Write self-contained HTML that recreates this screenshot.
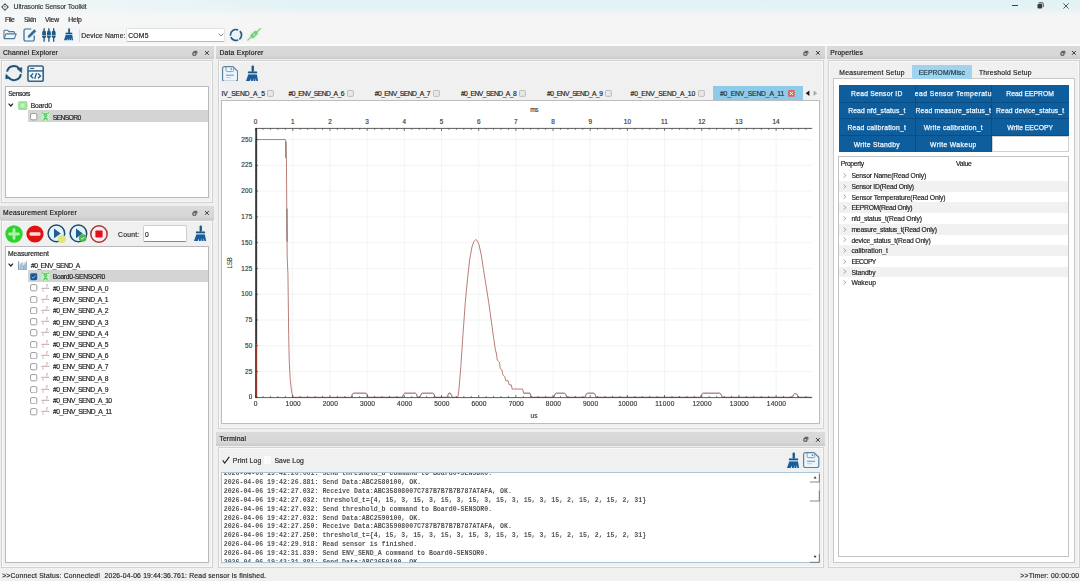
<!DOCTYPE html>
<html><head><meta charset="utf-8"><title>Ultrasonic Sensor Toolkit</title>
<style>
html,body{margin:0;padding:0}
body{width:1080px;height:581px;overflow:hidden;position:relative;background:#f0f0f0;font-family:"Liberation Sans",sans-serif;font-size:6.75px}
#r>div,#r>span,#r>svg{position:absolute}
#r{position:absolute;left:0;top:0;width:1080px;height:581px;opacity:0.999}
span{white-space:pre;-webkit-text-stroke:0.18px}
</style></head><body><div id="r">
<div style="left:0px;top:0px;width:1080px;height:26px;background:linear-gradient(to right,rgba(246,248,248,0.75),rgba(246,248,248,0) 320px),linear-gradient(to bottom,#e1f2f5 0,#e5f3f5 9px,#f5f5f5 15px)"></div>
<div style="left:0px;top:26px;width:1080px;height:18px;background:#f5f5f5"></div>
<div style="left:0px;top:43.8px;width:1080px;height:2px;background:#fbfbfb"></div>
<div style="left:0px;top:46px;width:213.8px;height:13.2px;background:linear-gradient(to bottom,#dbdbdb 0,#d6d6d6 78%,#cbcbcb 92%,#cecece 100%)"></div>
<div style="left:1.2px;top:59.800000000000004px;width:212.0px;height:143.70000000000002px;box-sizing:border-box;border:1px solid #d2d2d2;background:#f0f0f0;box-shadow:inset 0 0 0 1px #f9f9f9"></div>
<svg style="left:192.3px;top:49.7px" width="6" height="6" viewBox="0 0 6 6"><path d="M1.6 1.3h3.3v2.2M0.9 2.6h3v2.6h-3z" fill="none" stroke="#3a3a3a" stroke-width="0.9"/></svg>
<svg style="left:204.0px;top:50.1px" width="6" height="6" viewBox="0 0 6 6"><path d="M1 1L4.800 4.800M4.800 1L1 4.800" stroke="#333" stroke-width="0.950"/></svg>
<div style="left:0px;top:206px;width:213.8px;height:13.6px;background:linear-gradient(to bottom,#dbdbdb 0,#d6d6d6 78%,#cbcbcb 92%,#cecece 100%)"></div>
<div style="left:1.2px;top:220.2px;width:212.0px;height:347.59999999999997px;box-sizing:border-box;border:1px solid #d2d2d2;background:#f0f0f0;box-shadow:inset 0 0 0 1px #f9f9f9"></div>
<svg style="left:192.3px;top:209.9px" width="6" height="6" viewBox="0 0 6 6"><path d="M1.6 1.3h3.3v2.2M0.9 2.6h3v2.6h-3z" fill="none" stroke="#3a3a3a" stroke-width="0.9"/></svg>
<svg style="left:204.0px;top:210.3px" width="6" height="6" viewBox="0 0 6 6"><path d="M1 1L4.800 4.800M4.800 1L1 4.800" stroke="#333" stroke-width="0.950"/></svg>
<div style="left:216.4px;top:46px;width:608.4px;height:13.2px;background:linear-gradient(to bottom,#dbdbdb 0,#d6d6d6 78%,#cbcbcb 92%,#cecece 100%)"></div>
<div style="left:217.6px;top:59.800000000000004px;width:606.6px;height:369.0px;box-sizing:border-box;border:1px solid #d2d2d2;background:#f0f0f0;box-shadow:inset 0 0 0 1px #f9f9f9"></div>
<svg style="left:803.3px;top:49.7px" width="6" height="6" viewBox="0 0 6 6"><path d="M1.6 1.3h3.3v2.2M0.9 2.6h3v2.6h-3z" fill="none" stroke="#3a3a3a" stroke-width="0.9"/></svg>
<svg style="left:815.0px;top:50.1px" width="6" height="6" viewBox="0 0 6 6"><path d="M1 1L4.800 4.800M4.800 1L1 4.800" stroke="#333" stroke-width="0.950"/></svg>
<div style="left:216.4px;top:432.4px;width:608.4px;height:13.5px;background:linear-gradient(to bottom,#dbdbdb 0,#d6d6d6 78%,#cbcbcb 92%,#cecece 100%)"></div>
<div style="left:217.6px;top:446.5px;width:606.6px;height:121.3px;box-sizing:border-box;border:1px solid #d2d2d2;background:#f0f0f0;box-shadow:inset 0 0 0 1px #f9f9f9"></div>
<svg style="left:803.3px;top:436.25px" width="6" height="6" viewBox="0 0 6 6"><path d="M1.6 1.3h3.3v2.2M0.9 2.6h3v2.6h-3z" fill="none" stroke="#3a3a3a" stroke-width="0.9"/></svg>
<svg style="left:815.0px;top:436.65px" width="6" height="6" viewBox="0 0 6 6"><path d="M1 1L4.800 4.800M4.800 1L1 4.800" stroke="#333" stroke-width="0.950"/></svg>
<div style="left:827.2px;top:46px;width:253.79999999999995px;height:13.2px;background:linear-gradient(to bottom,#dbdbdb 0,#d6d6d6 78%,#cbcbcb 92%,#cecece 100%)"></div>
<div style="left:828.4000000000001px;top:59.800000000000004px;width:251.99999999999994px;height:508.6px;box-sizing:border-box;border:1px solid #d2d2d2;background:#f0f0f0;box-shadow:inset 0 0 0 1px #f9f9f9"></div>
<svg style="left:1059.5px;top:49.7px" width="6" height="6" viewBox="0 0 6 6"><path d="M1.6 1.3h3.3v2.2M0.9 2.6h3v2.6h-3z" fill="none" stroke="#3a3a3a" stroke-width="0.9"/></svg>
<svg style="left:1071.2px;top:50.1px" width="6" height="6" viewBox="0 0 6 6"><path d="M1 1L4.800 4.800M4.800 1L1 4.800" stroke="#333" stroke-width="0.950"/></svg>
<svg style="left:1.3px;top:2.5px" width="8" height="8" viewBox="0 0 8 8"><circle cx="4" cy="4" r="2.500" fill="#f4f8f8" stroke="#3c3c3c" stroke-width="0.900"/><path d="M4 0.200v1.500M4 6.300v1.500M0.200 4h1.500M6.300 4h1.500M4 2.900v1.400" stroke="#3c3c3c" stroke-width="0.900"/></svg>
<div style="left:1012.2px;top:5.2px;width:5.6px;height:0.8px;background:#444"></div>
<svg style="left:1036.5px;top:2.2px" width="7" height="7" viewBox="0 0 7 7"><path d="M1.8 0.7h3.3a1.2 1.2 0 0 1 1.2 1.2v3.2" fill="none" stroke="#333" stroke-width="0.8"/><rect x="0.5" y="1.8" width="4.7" height="4.7" rx="1.1" fill="#3a3a3a"/></svg>
<svg style="left:1063.3px;top:2.6px" width="6" height="6" viewBox="0 0 6 6"><path d="M0.4 0.4L5.6 5.6M5.6 0.4L0.4 5.6" stroke="#333" stroke-width="0.8"/></svg>
<svg style="left:3.2px;top:29.2px" width="14" height="11" viewBox="0 0 14 11"><path d="M1 9.2V2.2a1 1 0 0 1 1-1h2.6l1.3 1.4h4.6a1 1 0 0 1 1 1V4.6" fill="none" stroke="#4d7894" stroke-width="1.1"/><path d="M1.2 9.6L3 4.9h10.2L11.4 9.6z" fill="#eef6fb" stroke="#4d7894" stroke-width="1.1" stroke-linejoin="round"/></svg>
<svg style="left:23px;top:28px" width="14" height="14" viewBox="0 0 14 14"><path d="M8.2 1H2.4A1.4 1.4 0 0 0 1 2.4v9.2A1.4 1.4 0 0 0 2.4 13h7.4a1.4 1.4 0 0 0 1.4-1.4V7.5" fill="#eef6fb" stroke="#2f6a92" stroke-width="1.2"/><path d="M5 9.6l.5-2.2L11.300 1.600l1.700 1.700L7.200 9.1z" fill="#2f6a92" stroke="#2f6a92" stroke-width="0.5"/></svg>
<svg style="left:42px;top:28px" width="14" height="14" viewBox="0 0 14 14"><path d="M2.100 0.700V13.300M6.900 0.700V13.300M11.700 0.700V13.300" stroke="#1c5a88" stroke-width="1.300" stroke-linecap="round"/><g fill="#1c5a88"><rect x="0.200" y="2.600" width="3.800" height="7.700" rx="1.800"/><rect x="5" y="2.600" width="3.800" height="7.700" rx="1.800"/><rect x="9.800" y="2.600" width="3.800" height="7.700" rx="1.800"/></g><rect x="0" y="7.300" width="14" height="0.700" fill="#a9d6f2"/></svg>
<svg style="left:63.5px;top:28.4px;filter:drop-shadow(0 0 0.8px #cdeaf9)" width="9.81" height="12.38" viewBox="0 0 13 16.4"><rect x="5.600" y="0.400" width="2.300" height="6.400" rx="1" fill="#1f5580"/><rect x="1.900" y="6.400" width="9.200" height="1.500" rx="0.500" fill="#1d4668"/><rect x="2.200" y="7.900" width="8.700" height="1.500" fill="#8cc6f0"/><path d="M2.300 9.400h8.600l1.200 6.700h-1.800l-0.500-3-0.500 3h-1.700l-0.400-3-0.500 3h-1.700l-0.300-2.600-1 2.600H0z" fill="#1b5c98"/></svg>
<div style="left:79px;top:29px;width:0.7px;height:13px;background:#dcdcdc"></div>
<div style="left:126.2px;top:27.6px;width:99px;height:14.6px;background:#fff;border:0.6px solid #e2e2e2;border-bottom:0.8px solid #b8b8b8;border-radius:2px;box-sizing:border-box"></div>
<svg style="left:218px;top:33.3px" width="6" height="4" viewBox="0 0 6 4"><path d="M0.6 0.6L3 3l2.400-2.400" fill="none" stroke="#666" stroke-width="0.8"/></svg>
<svg style="left:228.600px;top:27.800px;filter:drop-shadow(0 0 0.800px #d5ecf9)" width="14" height="14" viewBox="0 0 14 14"><circle cx="7" cy="7" r="5.500" fill="#e8f3fa"/><path d="M1.55 7.72A5.5 5.5 0 0 1 9.10 1.92 M10.89 3.11A5.5 5.5 0 0 1 10.35 11.36 M9.10 12.08A5.5 5.5 0 0 1 1.92 9.10" fill="none" stroke="#2a5676" stroke-width="1.600"/></svg>
<svg style="left:247px;top:28px;filter:drop-shadow(0 0 1px #b5f2b5)" width="14" height="13" viewBox="0 0 14 13"><path d="M0.800 12.200L13.400 0.600" stroke="#74d174" stroke-width="1.100" stroke-linecap="round"/><rect x="3.200" y="4.400" width="7.800" height="4.200" rx="1.400" transform="rotate(-43 7.100 6.500)" fill="#74cf7c"/><rect x="6.200" y="5.700" width="1.700" height="1.700" fill="#b6f3b6" transform="rotate(-43 7.100 6.500)"/></svg>
<svg style="left:5px;top:65.2px;filter:drop-shadow(0 0 0.800px #d5ecf9)" width="18" height="17.2" viewBox="0 0 18 17.2"><path d="M2.05 6.64A7 7 0 0 1 14.42 3.79 M15.83 9.07A7 7 0 0 1 3.38 12.41" fill="none" stroke="#1f5273" stroke-width="2"/><path d="M12.200 3.700L16.900 2.700 16.600 7.700z M5.200 13.200L0.700 13.700 1 9.300z" fill="#1f5273" stroke="#1f5273" stroke-width="0.600" stroke-linejoin="round"/></svg>
<svg style="left:26.900px;top:65px;filter:drop-shadow(0 0 0.800px #d5ecf9)" width="17.200" height="17.200" viewBox="0 0 17.200 17.200"><rect x="1" y="1" width="15.200" height="15.200" rx="1.800" fill="#eef7fd" stroke="#3a6583" stroke-width="1.600"/><path d="M1 5.900h15.200" stroke="#3a6583" stroke-width="1.500"/><path d="M3 3.400h4.200" stroke="#2a4f6a" stroke-width="1"/><path d="M6.200 8.500L3.700 10.900 6.200 13.300M11 8.500l2.500 2.400L11 13.300M9.500 8.100L7.700 13.700" fill="none" stroke="#1f5a84" stroke-width="1.300"/></svg>
<div style="left:5px;top:86.2px;width:203.6px;height:111.6px;background:#fff;border:0.9px solid #b9b9b9;box-sizing:border-box"></div>
<svg style="left:8.10px;top:103.10px" width="5.600" height="3.800" viewBox="0 0 5.600 3.800"><path d="M0.600 0.600L2.800 3 5 0.600" fill="none" stroke="#222" stroke-width="1.200"/></svg>
<svg style="left:18.200px;top:100.500px;filter:drop-shadow(0 0 0.600px #c4f2c4)" width="9.600" height="9.200" viewBox="0 0 9.600 9.200"><rect x="0.200" y="0.200" width="9.100" height="8.700" rx="1.400" fill="#98e298"/><rect x="2.600" y="2.400" width="4.200" height="4.200" rx="1" fill="#c3f2c3"/><path d="M1.200 2.200h1M1.200 6.800h1M7.300 2.200h1M7.300 6.800h1" stroke="#c9f4c9" stroke-width="0.800"/></svg>
<div style="left:28.3px;top:110.4px;width:179.6px;height:11.5px;background:#d4d4d4"></div>
<svg style="left:30.20px;top:113.20px" width="7.600" height="7.600" viewBox="0 0 7.600 7.600"><rect x="0.550" y="0.550" width="6.300" height="6.300" rx="1.500" fill="#fdfdfd" stroke="#939393" stroke-width="0.900"/></svg>
<svg style="left:40.8px;top:112.2px;filter:drop-shadow(0 0 0.900px #a8eaa8)" width="9" height="9" viewBox="0 0 9 9"><rect x="0.300" y="0.300" width="8.400" height="8.400" rx="2" fill="#cdf3cd" opacity="0.850"/><g fill="none" stroke="#4fbf5c" stroke-width="1"><path d="M1 0.700C2.400 2.300 6.600 2.300 8 0.700"/><circle cx="4.500" cy="3.600" r="1.300" fill="#8fdc8f"/><path d="M2.200 8.600L4.500 5.200 6.800 8.600M2.600 6.800h3.800"/></g></svg>
<svg style="left:5px;top:224.5px" width="18" height="18" viewBox="0 0 18 18"><circle cx="9" cy="9" r="8.700" fill="#2fd32f"/><path d="M9 4.600v8.800M4.600 9h8.800" stroke="#aef3ae" stroke-width="2.800" stroke-linecap="round"/></svg>
<svg style="left:26.2px;top:224.5px" width="18" height="18" viewBox="0 0 18 18"><circle cx="9" cy="9" r="8.600" fill="#e01212"/><rect x="3.500" y="7.300" width="11" height="3.400" rx="1.300" fill="#fbd9d9"/></svg>
<svg style="left:47.400px;top:224.2px" width="20" height="20" viewBox="0 0 20 20"><circle cx="9.400" cy="9.400" r="8.300" fill="#e4f2fb" stroke="#1f4d6e" stroke-width="1.500"/><path d="M7 4.600v9.600L13.800 9.400z" fill="#1f5f8c"/><circle cx="14.900" cy="15.100" r="4" fill="#dde67a"/></svg>
<svg style="left:68.900px;top:224.2px" width="20" height="20" viewBox="0 0 20 20"><circle cx="9.400" cy="9.400" r="8.300" fill="#e4f2fb" stroke="#1f4d6e" stroke-width="1.500"/><path d="M7 4.600v9.600L13.800 9.400z" fill="#1f5f8c"/><circle cx="13.700" cy="14" r="3.800" fill="#4bb64b"/><path d="M11.900 14l1.300 1.300 2.200-2.400" fill="none" stroke="#e8ffe8" stroke-width="0.900"/></svg>
<svg style="left:90.200px;top:224.5px" width="18" height="18" viewBox="0 0 18 18"><circle cx="9" cy="9" r="8.200" fill="#fdeeee" stroke="#a63434" stroke-width="1.500"/><rect x="5.400" y="5.400" width="7.200" height="7.200" rx="0.800" fill="#e2101e"/></svg>
<div style="left:142.6px;top:225.3px;width:44.8px;height:16.8px;background:#fff;border:0.800px solid #cfcfcf;border-bottom-color:#8a8a8a;border-radius:2px;box-sizing:border-box"></div>
<svg style="left:193.7px;top:225.1px;filter:drop-shadow(0 0 0.8px #cdeaf9)" width="13.00" height="16.40" viewBox="0 0 13 16.4"><rect x="5.600" y="0.400" width="2.300" height="6.400" rx="1" fill="#1f5580"/><rect x="1.900" y="6.400" width="9.200" height="1.500" rx="0.500" fill="#1d4668"/><rect x="2.200" y="7.900" width="8.700" height="1.500" fill="#8cc6f0"/><path d="M2.300 9.400h8.600l1.200 6.700h-1.800l-0.500-3-0.500 3h-1.700l-0.400-3-0.500 3h-1.700l-0.300-2.600-1 2.600H0z" fill="#1b5c98"/></svg>
<div style="left:5px;top:246px;width:203.6px;height:316.7px;background:#fff;border:0.900px solid #b9b9b9;box-sizing:border-box"></div>
<svg style="left:8.10px;top:262.90px" width="5.600" height="3.800" viewBox="0 0 5.600 3.800"><path d="M0.600 0.600L2.800 3 5 0.600" fill="none" stroke="#222" stroke-width="1.200"/></svg>
<svg style="left:18.200px;top:260.600px" width="9" height="9.400" viewBox="0 0 9 9.400"><rect x="0.400" y="1.400" width="8" height="7.400" fill="#dfeaf3"/><g fill="none"><path d="M0.500 0.300v8.500h8M8.300 0.300v8.500" stroke="#7597b3" stroke-width="0.900"/><path d="M2.300 8.400V3.600M4 8.400V1.800M5.600 8.400V4.400M7 8.400V2.600" stroke="#8fb0ca" stroke-width="1.200"/></g></svg>
<div style="left:28.3px;top:270.4px;width:179.6px;height:11.5px;background:#d4d4d4"></div>
<svg style="left:30.10px;top:273.20px" width="7.600" height="7.600" viewBox="0 0 7.600 7.600"><rect x="0.200" y="0.200" width="7" height="7" rx="1.500" fill="#145a9e"/><path d="M1.900 3.900l1.300 1.300 2.400-2.700" fill="none" stroke="#a9cbe9" stroke-width="0.800"/></svg>
<svg style="left:40.8px;top:272.2px;filter:drop-shadow(0 0 0.900px #a8eaa8)" width="9" height="9" viewBox="0 0 9 9"><rect x="0.300" y="0.300" width="8.400" height="8.400" rx="2" fill="#cdf3cd" opacity="0.850"/><g fill="none" stroke="#4fbf5c" stroke-width="1"><path d="M1 0.700C2.400 2.300 6.600 2.300 8 0.700"/><circle cx="4.500" cy="3.600" r="1.300" fill="#8fdc8f"/><path d="M2.200 8.600L4.500 5.200 6.800 8.600M2.600 6.800h3.800"/></g></svg>
<svg style="left:30.10px;top:284.40px" width="7.600" height="7.600" viewBox="0 0 7.600 7.600"><rect x="0.550" y="0.550" width="6.300" height="6.300" rx="1.500" fill="#fdfdfd" stroke="#939393" stroke-width="0.900"/></svg>
<svg style="left:40.8px;top:283.5px" width="9" height="9" viewBox="0 0 9 9"><g stroke="#b48f8f" stroke-width="0.800" fill="none"><path d="M0.300 4.300h8"/><path d="M5.800 0.600v2.800M5.800 0.700h1.200M2 5.300v2.600" stroke="#cc9c9c"/></g></svg>
<svg style="left:30.10px;top:295.64px" width="7.600" height="7.600" viewBox="0 0 7.600 7.600"><rect x="0.550" y="0.550" width="6.300" height="6.300" rx="1.500" fill="#fdfdfd" stroke="#939393" stroke-width="0.900"/></svg>
<svg style="left:40.8px;top:294.74px" width="9" height="9" viewBox="0 0 9 9"><g stroke="#b48f8f" stroke-width="0.800" fill="none"><path d="M0.300 4.300h8"/><path d="M5.800 0.600v2.800M5.800 0.700h1.200M2 5.300v2.600" stroke="#cc9c9c"/></g></svg>
<svg style="left:30.10px;top:306.88px" width="7.600" height="7.600" viewBox="0 0 7.600 7.600"><rect x="0.550" y="0.550" width="6.300" height="6.300" rx="1.500" fill="#fdfdfd" stroke="#939393" stroke-width="0.900"/></svg>
<svg style="left:40.8px;top:305.98px" width="9" height="9" viewBox="0 0 9 9"><g stroke="#b48f8f" stroke-width="0.800" fill="none"><path d="M0.300 4.300h8"/><path d="M5.800 0.600v2.800M5.800 0.700h1.200M2 5.300v2.600" stroke="#cc9c9c"/></g></svg>
<svg style="left:30.10px;top:318.12px" width="7.600" height="7.600" viewBox="0 0 7.600 7.600"><rect x="0.550" y="0.550" width="6.300" height="6.300" rx="1.500" fill="#fdfdfd" stroke="#939393" stroke-width="0.900"/></svg>
<svg style="left:40.8px;top:317.22px" width="9" height="9" viewBox="0 0 9 9"><g stroke="#b48f8f" stroke-width="0.800" fill="none"><path d="M0.300 4.300h8"/><path d="M5.800 0.600v2.800M5.800 0.700h1.200M2 5.300v2.600" stroke="#cc9c9c"/></g></svg>
<svg style="left:30.10px;top:329.36px" width="7.600" height="7.600" viewBox="0 0 7.600 7.600"><rect x="0.550" y="0.550" width="6.300" height="6.300" rx="1.500" fill="#fdfdfd" stroke="#939393" stroke-width="0.900"/></svg>
<svg style="left:40.8px;top:328.46px" width="9" height="9" viewBox="0 0 9 9"><g stroke="#b48f8f" stroke-width="0.800" fill="none"><path d="M0.300 4.300h8"/><path d="M5.800 0.600v2.800M5.800 0.700h1.200M2 5.300v2.600" stroke="#cc9c9c"/></g></svg>
<svg style="left:30.10px;top:340.60px" width="7.600" height="7.600" viewBox="0 0 7.600 7.600"><rect x="0.550" y="0.550" width="6.300" height="6.300" rx="1.500" fill="#fdfdfd" stroke="#939393" stroke-width="0.900"/></svg>
<svg style="left:40.8px;top:339.7px" width="9" height="9" viewBox="0 0 9 9"><g stroke="#b48f8f" stroke-width="0.800" fill="none"><path d="M0.300 4.300h8"/><path d="M5.800 0.600v2.800M5.800 0.700h1.200M2 5.300v2.600" stroke="#cc9c9c"/></g></svg>
<svg style="left:30.10px;top:351.84px" width="7.600" height="7.600" viewBox="0 0 7.600 7.600"><rect x="0.550" y="0.550" width="6.300" height="6.300" rx="1.500" fill="#fdfdfd" stroke="#939393" stroke-width="0.900"/></svg>
<svg style="left:40.8px;top:350.94px" width="9" height="9" viewBox="0 0 9 9"><g stroke="#b48f8f" stroke-width="0.800" fill="none"><path d="M0.300 4.300h8"/><path d="M5.800 0.600v2.800M5.800 0.700h1.200M2 5.300v2.600" stroke="#cc9c9c"/></g></svg>
<svg style="left:30.10px;top:363.08px" width="7.600" height="7.600" viewBox="0 0 7.600 7.600"><rect x="0.550" y="0.550" width="6.300" height="6.300" rx="1.500" fill="#fdfdfd" stroke="#939393" stroke-width="0.900"/></svg>
<svg style="left:40.8px;top:362.18px" width="9" height="9" viewBox="0 0 9 9"><g stroke="#b48f8f" stroke-width="0.800" fill="none"><path d="M0.300 4.300h8"/><path d="M5.800 0.600v2.800M5.800 0.700h1.200M2 5.300v2.600" stroke="#cc9c9c"/></g></svg>
<svg style="left:30.10px;top:374.32px" width="7.600" height="7.600" viewBox="0 0 7.600 7.600"><rect x="0.550" y="0.550" width="6.300" height="6.300" rx="1.500" fill="#fdfdfd" stroke="#939393" stroke-width="0.900"/></svg>
<svg style="left:40.8px;top:373.42px" width="9" height="9" viewBox="0 0 9 9"><g stroke="#b48f8f" stroke-width="0.800" fill="none"><path d="M0.300 4.300h8"/><path d="M5.800 0.600v2.800M5.800 0.700h1.200M2 5.300v2.600" stroke="#cc9c9c"/></g></svg>
<svg style="left:30.10px;top:385.56px" width="7.600" height="7.600" viewBox="0 0 7.600 7.600"><rect x="0.550" y="0.550" width="6.300" height="6.300" rx="1.500" fill="#fdfdfd" stroke="#939393" stroke-width="0.900"/></svg>
<svg style="left:40.8px;top:384.65999999999997px" width="9" height="9" viewBox="0 0 9 9"><g stroke="#b48f8f" stroke-width="0.800" fill="none"><path d="M0.300 4.300h8"/><path d="M5.800 0.600v2.800M5.800 0.700h1.200M2 5.300v2.600" stroke="#cc9c9c"/></g></svg>
<svg style="left:30.10px;top:396.80px" width="7.600" height="7.600" viewBox="0 0 7.600 7.600"><rect x="0.550" y="0.550" width="6.300" height="6.300" rx="1.500" fill="#fdfdfd" stroke="#939393" stroke-width="0.900"/></svg>
<svg style="left:40.8px;top:395.9px" width="9" height="9" viewBox="0 0 9 9"><g stroke="#b48f8f" stroke-width="0.800" fill="none"><path d="M0.300 4.300h8"/><path d="M5.800 0.600v2.800M5.800 0.700h1.200M2 5.300v2.600" stroke="#cc9c9c"/></g></svg>
<svg style="left:30.10px;top:408.04px" width="7.600" height="7.600" viewBox="0 0 7.600 7.600"><rect x="0.550" y="0.550" width="6.300" height="6.300" rx="1.500" fill="#fdfdfd" stroke="#939393" stroke-width="0.900"/></svg>
<svg style="left:40.8px;top:407.14px" width="9" height="9" viewBox="0 0 9 9"><g stroke="#b48f8f" stroke-width="0.800" fill="none"><path d="M0.300 4.300h8"/><path d="M5.800 0.600v2.800M5.800 0.700h1.200M2 5.300v2.600" stroke="#cc9c9c"/></g></svg>
<svg style="left:221.9px;top:65.5px" width="16.32" height="15.936" viewBox="0 0 17 16.6"><path d="M2.300 0.700h9L16.200 5.400v8.700a1.800 1.800 0 0 1-1.800 1.800H2.300A1.800 1.800 0 0 1 0.600 14.100V2.500A1.800 1.800 0 0 1 2.300 0.700z" fill="#eaf5fd" stroke="#5c8199" stroke-width="1.200"/><path d="M4.200 1v3.600a1.200 1.200 0 0 0 1.200 1.200h5.400a1.200 1.200 0 0 0 1.200-1.200V1.600" fill="none" stroke="#7d9cb0" stroke-width="1"/><path d="M4.200 9.600h8.200" stroke="#8aa3b4" stroke-width="1.300"/><path d="M4.200 12h5.200" stroke="#b5cfe0" stroke-width="1"/><rect x="9" y="2.300" width="1.400" height="1.800" fill="#6a8ca6"/></svg>
<svg style="left:245.6px;top:65.4px;filter:drop-shadow(0 0 0.8px #cdeaf9)" width="13.00" height="16.40" viewBox="0 0 13 16.4"><rect x="5.600" y="0.400" width="2.300" height="6.400" rx="1" fill="#1f5580"/><rect x="1.900" y="6.400" width="9.200" height="1.500" rx="0.500" fill="#1d4668"/><rect x="2.200" y="7.900" width="8.700" height="1.500" fill="#8cc6f0"/><path d="M2.300 9.400h8.600l1.200 6.700h-1.800l-0.500-3-0.500 3h-1.700l-0.400-3-0.500 3h-1.700l-0.300-2.600-1 2.600H0z" fill="#1b5c98"/></svg>
<div style="left:221.3px;top:100px;width:598.6px;height:323.6px;background:#fff;border:0.900px solid #bdbdbd;box-sizing:border-box"></div>
<div style="left:713.4px;top:86.4px;width:89.2px;height:13.8px;background:#8ecae9"></div>
<svg style="left:266.60px;top:90.40px" width="7" height="7" viewBox="0 0 7 7"><rect x="0.450" y="0.450" width="5.900" height="5.900" rx="0.800" fill="#e8e8e8" stroke="#b0b0b0" stroke-width="0.800"/></svg>
<svg style="left:346.80px;top:90.40px" width="7" height="7" viewBox="0 0 7 7"><rect x="0.450" y="0.450" width="5.900" height="5.900" rx="0.800" fill="#e8e8e8" stroke="#b0b0b0" stroke-width="0.800"/></svg>
<svg style="left:432.90px;top:90.40px" width="7" height="7" viewBox="0 0 7 7"><rect x="0.450" y="0.450" width="5.900" height="5.900" rx="0.800" fill="#e8e8e8" stroke="#b0b0b0" stroke-width="0.800"/></svg>
<svg style="left:519.10px;top:90.40px" width="7" height="7" viewBox="0 0 7 7"><rect x="0.450" y="0.450" width="5.900" height="5.900" rx="0.800" fill="#e8e8e8" stroke="#b0b0b0" stroke-width="0.800"/></svg>
<svg style="left:605.20px;top:90.40px" width="7" height="7" viewBox="0 0 7 7"><rect x="0.450" y="0.450" width="5.900" height="5.900" rx="0.800" fill="#e8e8e8" stroke="#b0b0b0" stroke-width="0.800"/></svg>
<svg style="left:698.00px;top:90.40px" width="7" height="7" viewBox="0 0 7 7"><rect x="0.450" y="0.450" width="5.900" height="5.900" rx="0.800" fill="#e8e8e8" stroke="#b0b0b0" stroke-width="0.800"/></svg>
<svg style="left:787.60px;top:90.20px" width="7" height="7" viewBox="0 0 7 7"><rect x="0.100" y="0.100" width="6.600" height="6.600" rx="0.800" fill="#e2625a"/><path d="M1.900 1.900l3 3M4.900 1.900l-3 3" stroke="#fff" stroke-width="1"/></svg>
<svg style="left:804.600px;top:89.600px" width="5" height="6.400" viewBox="0 0 5 6.400"><path d="M4.400 0.400v5.600L0.700 3.200z" fill="#111"/></svg>
<svg style="left:812.800px;top:89.600px" width="5" height="6.400" viewBox="0 0 5 6.400"><path d="M0.600 0.400v5.600L4.300 3.200z" fill="#a9a9a9"/></svg>
<svg style="left:0;top:0" width="1080" height="581" viewBox="0 0 1080 581"><path d="M292.78 128.6V397.3 M329.96 128.6V397.3 M367.14 128.6V397.3 M404.32 128.6V397.3 M441.50 128.6V397.3 M478.68 128.6V397.3 M515.86 128.6V397.3 M553.04 128.6V397.3 M590.22 128.6V397.3 M627.40 128.6V397.3 M664.58 128.6V397.3 M701.76 128.6V397.3 M738.94 128.6V397.3 M776.12 128.6V397.3 M255.6 371.53H812.2 M255.6 345.75H812.2 M255.6 319.98H812.2 M255.6 294.20H812.2 M255.6 268.43H812.2 M255.6 242.65H812.2 M255.6 216.88H812.2 M255.6 191.10H812.2 M255.6 165.33H812.2 M255.6 139.55H812.2" stroke="#efefef" stroke-width="0.700" fill="none"/><path d="M255.60 397.30 L255.79 345.75 L256.05 139.55 L285.34 139.55 L285.90 141.61 L286.09 155.02 L286.46 160.17 L286.83 222.03 L287.20 258.12 L287.95 273.58 L288.69 335.44 L289.25 361.22 L290.18 378.74 L291.29 389.05 L292.78 397.30 L351.52 397.30 L352.27 394.21 L353.76 393.18 L365.65 393.18 L367.14 394.21 L367.88 397.30 L402.46 397.30 L403.58 394.21 L404.69 393.18 L415.47 393.18 L416.59 394.21 L417.33 397.30 L419.94 397.30 L421.05 394.21 L422.17 393.18 L432.58 393.18 L434.06 394.21 L435.18 397.30 L447.08 397.30 L447.82 395.24 L448.94 393.18 L450.42 393.18 L451.54 395.24 L452.28 397.30 L457.86 397.30 L458.97 389.05 L460.83 366.37 L463.06 333.38 L465.30 302.45 L467.53 278.74 L469.76 259.15 L471.99 246.77 L473.85 241.62 L475.71 239.56 L477.19 240.59 L479.05 244.71 L481.28 255.02 L483.51 269.46 L486.12 285.95 L488.72 302.45 L491.32 321.01 L493.55 337.50 L495.41 349.87 L496.53 354.00 L497.27 360.18 L499.50 362.25 L500.24 368.43 L501.73 369.46 L502.85 374.62 L504.71 376.68 L505.82 380.80 L508.05 380.80 L509.17 384.93 L511.40 384.93 L512.14 389.05 L522.55 389.05 L523.67 393.18 L529.99 393.18 L531.48 397.30 L553.78 397.30 L554.90 394.21 L556.39 393.18 L564.19 393.18 L565.68 394.21 L566.80 397.30 L585.01 397.30 L586.13 394.21 L587.62 393.18 L593.57 393.18 L595.05 394.21 L596.17 397.30 L700.27 397.30 L701.76 394.21 L703.25 393.18 L719.61 393.18 L721.09 394.21 L722.21 397.30 L792.48 397.30 L793.41 394.72 L794.52 393.69 L796.20 393.69 L797.13 394.72 L798.06 397.30 L811.81 397.30" stroke="#ad6660" stroke-width="0.850" fill="none" stroke-linejoin="round"/><path d="M351.52 397.30 L352.27 394.21 L353.76 393.18 L365.65 393.18 L367.14 394.21 L367.88 397.30 L402.46 397.30 L403.58 394.21 L404.69 393.18 L415.47 393.18 L416.59 394.21 L417.33 397.30 L419.94 397.30 L421.05 394.21 L422.17 393.18 L432.58 393.18 L434.06 394.21 L435.18 397.30 L447.08 397.30 L447.82 395.24 L448.94 393.18 L450.42 393.18 L451.54 395.24 L452.28 397.30 M523.67 393.18 L529.99 393.18 L531.48 397.30 L553.78 397.30 L554.90 394.21 L556.39 393.18 L564.19 393.18 L565.68 394.21 L566.80 397.30 L585.01 397.30 L586.13 394.21 L587.62 393.18 L593.57 393.18 L595.05 394.21 L596.17 397.30 L700.27 397.30 L701.76 394.21 L703.25 393.18 L719.61 393.18 L721.09 394.21 L722.21 397.30 L792.48 397.30 L793.41 394.72 L794.52 393.69 L796.20 393.69 L797.13 394.72 L798.06 397.30 L811.81 397.30" stroke="#777" stroke-width="0.700" fill="none" stroke-linejoin="round" opacity="0.800"/><path d="M285.90 141.61V158.11M287.05 208.63V241.62" stroke="#555" stroke-width="0.800"/><path d="M255.6 128.4H812.2M255.6 397.6H812.2" stroke="#4a4a4a" stroke-width="0.900"/><path d="M256.2 128.0V397.90000000000003" stroke="#3a3a3a" stroke-width="1.900"/><path d="M255.60 397.3v-2.2M255.60 128.6v2.2 M263.04 397.3v-1.2M263.04 128.6v1.2 M270.47 397.3v-1.2M270.47 128.6v1.2 M277.91 397.3v-1.2M277.91 128.6v1.2 M285.34 397.3v-1.2M285.34 128.6v1.2 M292.78 397.3v-2.2M292.78 128.6v2.2 M300.22 397.3v-1.2M300.22 128.6v1.2 M307.65 397.3v-1.2M307.65 128.6v1.2 M315.09 397.3v-1.2M315.09 128.6v1.2 M322.52 397.3v-1.2M322.52 128.6v1.2 M329.96 397.3v-2.2M329.96 128.6v2.2 M337.40 397.3v-1.2M337.40 128.6v1.2 M344.83 397.3v-1.2M344.83 128.6v1.2 M352.27 397.3v-1.2M352.27 128.6v1.2 M359.70 397.3v-1.2M359.70 128.6v1.2 M367.14 397.3v-2.2M367.14 128.6v2.2 M374.58 397.3v-1.2M374.58 128.6v1.2 M382.01 397.3v-1.2M382.01 128.6v1.2 M389.45 397.3v-1.2M389.45 128.6v1.2 M396.88 397.3v-1.2M396.88 128.6v1.2 M404.32 397.3v-2.2M404.32 128.6v2.2 M411.76 397.3v-1.2M411.76 128.6v1.2 M419.19 397.3v-1.2M419.19 128.6v1.2 M426.63 397.3v-1.2M426.63 128.6v1.2 M434.06 397.3v-1.2M434.06 128.6v1.2 M441.50 397.3v-2.2M441.50 128.6v2.2 M448.94 397.3v-1.2M448.94 128.6v1.2 M456.37 397.3v-1.2M456.37 128.6v1.2 M463.81 397.3v-1.2M463.81 128.6v1.2 M471.24 397.3v-1.2M471.24 128.6v1.2 M478.68 397.3v-2.2M478.68 128.6v2.2 M486.12 397.3v-1.2M486.12 128.6v1.2 M493.55 397.3v-1.2M493.55 128.6v1.2 M500.99 397.3v-1.2M500.99 128.6v1.2 M508.42 397.3v-1.2M508.42 128.6v1.2 M515.86 397.3v-2.2M515.86 128.6v2.2 M523.30 397.3v-1.2M523.30 128.6v1.2 M530.73 397.3v-1.2M530.73 128.6v1.2 M538.17 397.3v-1.2M538.17 128.6v1.2 M545.60 397.3v-1.2M545.60 128.6v1.2 M553.04 397.3v-2.2M553.04 128.6v2.2 M560.48 397.3v-1.2M560.48 128.6v1.2 M567.91 397.3v-1.2M567.91 128.6v1.2 M575.35 397.3v-1.2M575.35 128.6v1.2 M582.78 397.3v-1.2M582.78 128.6v1.2 M590.22 397.3v-2.2M590.22 128.6v2.2 M597.66 397.3v-1.2M597.66 128.6v1.2 M605.09 397.3v-1.2M605.09 128.6v1.2 M612.53 397.3v-1.2M612.53 128.6v1.2 M619.96 397.3v-1.2M619.96 128.6v1.2 M627.40 397.3v-2.2M627.40 128.6v2.2 M634.84 397.3v-1.2M634.84 128.6v1.2 M642.27 397.3v-1.2M642.27 128.6v1.2 M649.71 397.3v-1.2M649.71 128.6v1.2 M657.14 397.3v-1.2M657.14 128.6v1.2 M664.58 397.3v-2.2M664.58 128.6v2.2 M672.02 397.3v-1.2M672.02 128.6v1.2 M679.45 397.3v-1.2M679.45 128.6v1.2 M686.89 397.3v-1.2M686.89 128.6v1.2 M694.32 397.3v-1.2M694.32 128.6v1.2 M701.76 397.3v-2.2M701.76 128.6v2.2 M709.20 397.3v-1.2M709.20 128.6v1.2 M716.63 397.3v-1.2M716.63 128.6v1.2 M724.07 397.3v-1.2M724.07 128.6v1.2 M731.50 397.3v-1.2M731.50 128.6v1.2 M738.94 397.3v-2.2M738.94 128.6v2.2 M746.38 397.3v-1.2M746.38 128.6v1.2 M753.81 397.3v-1.2M753.81 128.6v1.2 M761.25 397.3v-1.2M761.25 128.6v1.2 M768.68 397.3v-1.2M768.68 128.6v1.2 M776.12 397.3v-2.2M776.12 128.6v2.2 M783.56 397.3v-1.2M783.56 128.6v1.2 M790.99 397.3v-1.2M790.99 128.6v1.2 M798.43 397.3v-1.2M798.43 128.6v1.2 M805.86 397.3v-1.2M805.86 128.6v1.2 M255.6 397.30h2.4 M255.6 392.15h1.3 M255.6 386.99h1.3 M255.6 381.84h1.3 M255.6 376.68h1.3 M255.6 371.53h2.4 M255.6 366.37h1.3 M255.6 361.22h1.3 M255.6 356.06h1.3 M255.6 350.91h1.3 M255.6 345.75h2.4 M255.6 340.60h1.3 M255.6 335.44h1.3 M255.6 330.29h1.3 M255.6 325.13h1.3 M255.6 319.98h2.4 M255.6 314.82h1.3 M255.6 309.67h1.3 M255.6 304.51h1.3 M255.6 299.36h1.3 M255.6 294.20h2.4 M255.6 289.05h1.3 M255.6 283.89h1.3 M255.6 278.74h1.3 M255.6 273.58h1.3 M255.6 268.43h2.4 M255.6 263.27h1.3 M255.6 258.12h1.3 M255.6 252.96h1.3 M255.6 247.81h1.3 M255.6 242.65h2.4 M255.6 237.50h1.3 M255.6 232.34h1.3 M255.6 227.19h1.3 M255.6 222.03h1.3 M255.6 216.88h2.4 M255.6 211.72h1.3 M255.6 206.57h1.3 M255.6 201.41h1.3 M255.6 196.26h1.3 M255.6 191.10h2.4 M255.6 185.95h1.3 M255.6 180.79h1.3 M255.6 175.64h1.3 M255.6 170.48h1.3 M255.6 165.33h2.4 M255.6 160.17h1.3 M255.6 155.02h1.3 M255.6 149.86h1.3 M255.6 144.71h1.3 M255.6 139.55h2.4" stroke="#2e2e2e" stroke-width="0.700" fill="none"/><path d="M256.4 343.69V397.3" stroke="#c0392b" stroke-width="0.700"/></svg>
<div style="left:224px;top:259px;width:12px;height:8px;transform:rotate(-90deg);font-size:6.400px;line-height:8px;text-align:center;color:#2a2a2a;letter-spacing:-0.300px">LSB</div>
<svg style="left:221.800px;top:456px" width="8" height="8" viewBox="0 0 8 8"><path d="M0.700 4.400l2 2.600L7.300 0.800" fill="none" stroke="#222" stroke-width="1.100"/></svg>
<div style="left:263.7px;top:455.9px;width:7.5px;height:8.6px;background:#fbfbfb"></div>
<svg style="left:787.4px;top:451.5px;filter:drop-shadow(0 0 0.8px #cdeaf9)" width="13.00" height="16.40" viewBox="0 0 13 16.4"><rect x="5.600" y="0.400" width="2.300" height="6.400" rx="1" fill="#1f5580"/><rect x="1.900" y="6.400" width="9.200" height="1.500" rx="0.500" fill="#1d4668"/><rect x="2.200" y="7.900" width="8.700" height="1.500" fill="#8cc6f0"/><path d="M2.300 9.400h8.600l1.200 6.700h-1.800l-0.500-3-0.500 3h-1.700l-0.400-3-0.500 3h-1.700l-0.300-2.600-1 2.600H0z" fill="#1b5c98"/></svg>
<svg style="left:803px;top:451.7px" width="16.575" height="16.185000000000002" viewBox="0 0 17 16.6"><path d="M2.300 0.700h9L16.200 5.400v8.700a1.800 1.800 0 0 1-1.800 1.800H2.300A1.800 1.800 0 0 1 0.600 14.100V2.500A1.800 1.800 0 0 1 2.300 0.700z" fill="#eaf5fd" stroke="#5c8199" stroke-width="1.200"/><path d="M4.200 1v3.600a1.200 1.200 0 0 0 1.200 1.200h5.400a1.200 1.200 0 0 0 1.200-1.200V1.600" fill="none" stroke="#7d9cb0" stroke-width="1"/><path d="M4.200 9.600h8.200" stroke="#8aa3b4" stroke-width="1.300"/><path d="M4.200 12h5.200" stroke="#b5cfe0" stroke-width="1"/><rect x="9" y="2.300" width="1.400" height="1.800" fill="#6a8ca6"/></svg>
<div style="left:220.7px;top:472px;width:599px;height:91.2px;background:#fff;border:0.900px solid #a9c6d6;box-sizing:border-box"></div>
<div style="left:221.600px;top:472.900px;width:590px;height:89.400px;overflow:hidden;font-family:'Liberation Mono';font-size:6.580px;font-weight:700;color:#555"><div style="position:absolute;left:2.100px;top:-2.80px;height:8.890px;line-height:8.890px;white-space:pre">2026-04-06 19:42:26.661: Send threshold_b command to Board0-SENSOR0.</div><div style="position:absolute;left:2.100px;top:6.09px;height:8.890px;line-height:8.890px;white-space:pre">2026-04-06 19:42:26.881: Send Data:ABC2580100, OK.</div><div style="position:absolute;left:2.100px;top:14.98px;height:8.890px;line-height:8.890px;white-space:pre">2026-04-06 19:42:27.032: Receive Data:ABC35808007C787B7B7B7B787ATAFA, OK.</div><div style="position:absolute;left:2.100px;top:23.87px;height:8.890px;line-height:8.890px;white-space:pre">2026-04-06 19:42:27.032: threshold_t={4, 15, 3, 15, 3, 15, 3, 15, 3, 15, 3, 15, 3, 15, 2, 15, 2, 15, 2, 31}</div><div style="position:absolute;left:2.100px;top:32.76px;height:8.890px;line-height:8.890px;white-space:pre">2026-04-06 19:42:27.032: Send threshold_b command to Board0-SENSOR0.</div><div style="position:absolute;left:2.100px;top:41.65px;height:8.890px;line-height:8.890px;white-space:pre">2026-04-06 19:42:27.032: Send Data:ABC2590100, OK.</div><div style="position:absolute;left:2.100px;top:50.54px;height:8.890px;line-height:8.890px;white-space:pre">2026-04-06 19:42:27.250: Receive Data:ABC35908007C787B7B7B7B787ATAFA, OK.</div><div style="position:absolute;left:2.100px;top:59.43px;height:8.890px;line-height:8.890px;white-space:pre">2026-04-06 19:42:27.250: threshold_t={4, 15, 3, 15, 3, 15, 3, 15, 3, 15, 3, 15, 3, 15, 2, 15, 2, 15, 2, 31}</div><div style="position:absolute;left:2.100px;top:68.32px;height:8.890px;line-height:8.890px;white-space:pre">2026-04-06 19:42:29.918: Read sensor is finished.</div><div style="position:absolute;left:2.100px;top:77.21px;height:8.890px;line-height:8.890px;white-space:pre">2026-04-06 19:42:31.839: Send ENV_SEND_A command to Board0-SENSOR0.</div><div style="position:absolute;left:2.100px;top:86.10px;height:8.890px;line-height:8.890px;white-space:pre">2026-04-06 19:42:31.881: Send Data:ABC2650100, OK.</div></div>
<svg style="left:808px;top:473px" width="12" height="90" viewBox="0 0 12 90"><g stroke="#555" stroke-width="0.700" fill="none"><path d="M2 9h9.300V1"/><path d="M2 28h9.300V17.500"/><path d="M2 89.300h9.300V81"/></g><path d="M5.600 5.600h3L7.100 3.300zM5.600 82.800h3L7.100 85.100z" fill="#333"/></svg>
<div style="left:832.5px;top:78.4px;width:242.3px;height:485px;background:#fff;border:0.900px solid #c9c9c9;box-sizing:border-box"></div>
<div style="left:911.5px;top:64.8px;width:60.6px;height:13.8px;background:#9fd3ee"></div>
<div style="left:838.5px;top:85.3px;width:230.20000000000005px;height:67.10000000000001px;background:#0e5d9c"></div>
<div style="left:991.9px;top:135.9px;width:76.80000000000003px;height:16.50000000000001px;background:#fff;border:0.600px solid #d0d0d0;box-sizing:border-box"></div>
<div style="left:914.8000000000001px;top:85.3px;width:0.6px;height:67.10000000000001px;background:#0a4c84"></div>
<div style="left:991.3000000000001px;top:85.3px;width:0.6px;height:67.10000000000001px;background:#0a4c84"></div>
<div style="left:838.5px;top:101.60000000000001px;width:230.20000000000005px;height:0.6px;background:#0a4c84"></div>
<div style="left:838.5px;top:118.4px;width:230.20000000000005px;height:0.6px;background:#0a4c84"></div>
<div style="left:838.5px;top:135.29999999999998px;width:230.20000000000005px;height:0.6px;background:#0a4c84"></div>
<div style="left:838.4px;top:156.4px;width:230.6px;height:401px;background:#fff;border:0.900px solid #c2c2c2;box-sizing:border-box"></div>
<svg style="left:842.600px;top:173.00px" width="3.600" height="5.200" viewBox="0 0 3.600 5.200"><path d="M0.600 0.500l2.200 2.100L0.600 4.700" fill="none" stroke="#777" stroke-width="0.700"/></svg>
<div style="left:839.3px;top:181.01px;width:228.8px;height:10.7px;background:#f1f1f1"></div>
<svg style="left:842.600px;top:183.71px" width="3.600" height="5.200" viewBox="0 0 3.600 5.200"><path d="M0.600 0.500l2.200 2.100L0.600 4.700" fill="none" stroke="#777" stroke-width="0.700"/></svg>
<svg style="left:842.600px;top:194.42px" width="3.600" height="5.200" viewBox="0 0 3.600 5.200"><path d="M0.600 0.500l2.200 2.100L0.600 4.700" fill="none" stroke="#777" stroke-width="0.700"/></svg>
<div style="left:839.3px;top:202.42999999999998px;width:228.8px;height:10.7px;background:#f1f1f1"></div>
<svg style="left:842.600px;top:205.13px" width="3.600" height="5.200" viewBox="0 0 3.600 5.200"><path d="M0.600 0.500l2.200 2.100L0.600 4.700" fill="none" stroke="#777" stroke-width="0.700"/></svg>
<svg style="left:842.600px;top:215.84px" width="3.600" height="5.200" viewBox="0 0 3.600 5.200"><path d="M0.600 0.500l2.200 2.100L0.600 4.700" fill="none" stroke="#777" stroke-width="0.700"/></svg>
<div style="left:839.3px;top:223.85px;width:228.8px;height:10.7px;background:#f1f1f1"></div>
<svg style="left:842.600px;top:226.55px" width="3.600" height="5.200" viewBox="0 0 3.600 5.200"><path d="M0.600 0.500l2.200 2.100L0.600 4.700" fill="none" stroke="#777" stroke-width="0.700"/></svg>
<svg style="left:842.600px;top:237.26px" width="3.600" height="5.200" viewBox="0 0 3.600 5.200"><path d="M0.600 0.500l2.200 2.100L0.600 4.700" fill="none" stroke="#777" stroke-width="0.700"/></svg>
<div style="left:839.3px;top:245.26999999999998px;width:228.8px;height:10.7px;background:#f1f1f1"></div>
<svg style="left:842.600px;top:247.97px" width="3.600" height="5.200" viewBox="0 0 3.600 5.200"><path d="M0.600 0.500l2.200 2.100L0.600 4.700" fill="none" stroke="#777" stroke-width="0.700"/></svg>
<svg style="left:842.600px;top:258.68px" width="3.600" height="5.200" viewBox="0 0 3.600 5.200"><path d="M0.600 0.500l2.200 2.100L0.600 4.700" fill="none" stroke="#777" stroke-width="0.700"/></svg>
<div style="left:839.3px;top:266.69px;width:228.8px;height:10.7px;background:#f1f1f1"></div>
<svg style="left:842.600px;top:269.39px" width="3.600" height="5.200" viewBox="0 0 3.600 5.200"><path d="M0.600 0.500l2.200 2.100L0.600 4.700" fill="none" stroke="#777" stroke-width="0.700"/></svg>
<svg style="left:842.600px;top:280.10px" width="3.600" height="5.200" viewBox="0 0 3.600 5.200"><path d="M0.600 0.500l2.200 2.100L0.600 4.700" fill="none" stroke="#777" stroke-width="0.700"/></svg>
<span style="left:3.00px;top:47.88px;line-height:9.45px;font-size:6.75px;color:#1a1a1a;font-weight:400;letter-spacing:0.178px;">Channel Explorer</span>
<span style="left:3.00px;top:208.08px;line-height:9.45px;font-size:6.75px;color:#1a1a1a;font-weight:400;letter-spacing:0.286px;">Measurement Explorer</span>
<span style="left:219.40px;top:47.88px;line-height:9.45px;font-size:6.75px;color:#1a1a1a;font-weight:400;letter-spacing:0.225px;">Data Explorer</span>
<span style="left:219.40px;top:434.42px;line-height:9.45px;font-size:6.75px;color:#1a1a1a;font-weight:400;letter-spacing:0.161px;">Terminal</span>
<span style="left:830.20px;top:47.88px;line-height:9.45px;font-size:6.75px;color:#1a1a1a;font-weight:400;letter-spacing:0.223px;">Properties</span>
<span style="left:13.60px;top:2.38px;line-height:9.45px;font-size:6.75px;color:#3a3a3a;font-weight:400;letter-spacing:-0.047px;">Ultrasonic Sensor Toolkit</span>
<span style="left:5.00px;top:14.78px;line-height:9.45px;font-size:6.75px;color:#2a2a2a;font-weight:400;letter-spacing:-0.373px;">File</span>
<span style="left:23.90px;top:14.78px;line-height:9.45px;font-size:6.75px;color:#2a2a2a;font-weight:400;letter-spacing:-0.235px;">Skin</span>
<span style="left:45.00px;top:14.78px;line-height:9.45px;font-size:6.75px;color:#2a2a2a;font-weight:400;letter-spacing:-0.154px;">View</span>
<span style="left:68.30px;top:14.78px;line-height:9.45px;font-size:6.75px;color:#2a2a2a;font-weight:400;letter-spacing:-0.123px;">Help</span>
<span style="left:81.30px;top:31.07px;line-height:9.45px;font-size:6.75px;color:#2a2a2a;font-weight:400;letter-spacing:0.159px;">Device Name:</span>
<span style="left:128.20px;top:30.88px;line-height:9.45px;font-size:6.75px;color:#222;font-weight:400;letter-spacing:0.271px;">COM5</span>
<span style="left:8.20px;top:89.28px;line-height:9.45px;font-size:6.75px;color:#1c1c1c;font-weight:400;letter-spacing:-0.409px;">Sensors</span>
<span style="left:30.70px;top:101.28px;line-height:9.45px;font-size:6.75px;color:#1c1c1c;font-weight:400;letter-spacing:-0.114px;">Board0</span>
<span style="left:52.80px;top:112.68px;line-height:9.45px;font-size:6.75px;color:#1c1c1c;font-weight:400;letter-spacing:-0.652px;">SENSOR0</span>
<span style="left:118.00px;top:229.68px;line-height:9.45px;font-size:6.75px;color:#2a2a2a;font-weight:400;letter-spacing:0.268px;">Count:</span>
<span style="left:145.00px;top:229.68px;line-height:9.45px;font-size:6.75px;color:#1c1c1c;font-weight:400;letter-spacing:-0.166px;">0</span>
<span style="left:8.00px;top:248.88px;line-height:9.45px;font-size:6.75px;color:#1c1c1c;font-weight:400;letter-spacing:-0.044px;">Measurement</span>
<span style="left:31.00px;top:260.87px;line-height:9.45px;font-size:6.75px;color:#1c1c1c;font-weight:400;letter-spacing:-0.547px;">#0_ENV_SEND_A</span>
<span style="left:52.70px;top:272.47px;line-height:9.45px;font-size:6.75px;color:#1c1c1c;font-weight:400;letter-spacing:-0.284px;">Board0-SENSOR0</span>
<span style="left:53.00px;top:283.77px;line-height:9.45px;font-size:6.75px;color:#1c1c1c;font-weight:400;letter-spacing:-0.561px;">#0_ENV_SEND_A_0</span>
<span style="left:53.00px;top:295.01px;line-height:9.45px;font-size:6.75px;color:#1c1c1c;font-weight:400;letter-spacing:-0.561px;">#0_ENV_SEND_A_1</span>
<span style="left:53.00px;top:306.25px;line-height:9.45px;font-size:6.75px;color:#1c1c1c;font-weight:400;letter-spacing:-0.561px;">#0_ENV_SEND_A_2</span>
<span style="left:53.00px;top:317.50px;line-height:9.45px;font-size:6.75px;color:#1c1c1c;font-weight:400;letter-spacing:-0.561px;">#0_ENV_SEND_A_3</span>
<span style="left:53.00px;top:328.73px;line-height:9.45px;font-size:6.75px;color:#1c1c1c;font-weight:400;letter-spacing:-0.561px;">#0_ENV_SEND_A_4</span>
<span style="left:53.00px;top:339.97px;line-height:9.45px;font-size:6.75px;color:#1c1c1c;font-weight:400;letter-spacing:-0.561px;">#0_ENV_SEND_A_5</span>
<span style="left:53.00px;top:351.21px;line-height:9.45px;font-size:6.75px;color:#1c1c1c;font-weight:400;letter-spacing:-0.561px;">#0_ENV_SEND_A_6</span>
<span style="left:53.00px;top:362.45px;line-height:9.45px;font-size:6.75px;color:#1c1c1c;font-weight:400;letter-spacing:-0.561px;">#0_ENV_SEND_A_7</span>
<span style="left:53.00px;top:373.69px;line-height:9.45px;font-size:6.75px;color:#1c1c1c;font-weight:400;letter-spacing:-0.561px;">#0_ENV_SEND_A_8</span>
<span style="left:53.00px;top:384.93px;line-height:9.45px;font-size:6.75px;color:#1c1c1c;font-weight:400;letter-spacing:-0.561px;">#0_ENV_SEND_A_9</span>
<span style="left:53.00px;top:396.17px;line-height:9.45px;font-size:6.75px;color:#1c1c1c;font-weight:400;letter-spacing:-0.536px;">#0_ENV_SEND_A_10</span>
<span style="left:53.00px;top:407.41px;line-height:9.45px;font-size:6.75px;color:#1c1c1c;font-weight:400;letter-spacing:-0.504px;">#0_ENV_SEND_A_11</span>
<span style="left:221.40px;top:89.38px;line-height:9.45px;font-size:6.75px;color:#242424;font-weight:400;letter-spacing:-0.114px;">IV_SEND_A_5</span>
<span style="left:288.60px;top:89.38px;line-height:9.45px;font-size:6.75px;color:#242424;font-weight:400;letter-spacing:-0.535px;">#0_ENV_SEND_A_6</span>
<span style="left:374.70px;top:89.38px;line-height:9.45px;font-size:6.75px;color:#242424;font-weight:400;letter-spacing:-0.535px;">#0_ENV_SEND_A_7</span>
<span style="left:460.90px;top:89.38px;line-height:9.45px;font-size:6.75px;color:#242424;font-weight:400;letter-spacing:-0.535px;">#0_ENV_SEND_A_8</span>
<span style="left:547.00px;top:89.38px;line-height:9.45px;font-size:6.75px;color:#242424;font-weight:400;letter-spacing:-0.535px;">#0_ENV_SEND_A_9</span>
<span style="left:630.60px;top:89.38px;line-height:9.45px;font-size:6.75px;color:#242424;font-weight:400;letter-spacing:-0.173px;">#0_ENV_SEND_A_10</span>
<span style="left:720.00px;top:89.38px;line-height:9.45px;font-size:6.75px;color:#1c3444;font-weight:400;letter-spacing:-0.167px;">#0_ENV_SEND_A_11</span>
<span style="left:253.80px;top:118.42px;line-height:8.96px;font-size:6.4px;color:#3c3c3c;font-weight:400;letter-spacing:0.038px;">0</span>
<span style="left:253.80px;top:399.38px;line-height:9.24px;font-size:6.6px;color:#3c3c3c;font-weight:400;letter-spacing:-0.072px;">0</span>
<span style="left:290.98px;top:118.42px;line-height:8.96px;font-size:6.4px;color:#3c3c3c;font-weight:400;letter-spacing:0.038px;">1</span>
<span style="left:285.58px;top:399.38px;line-height:9.24px;font-size:6.6px;color:#3c3c3c;font-weight:400;letter-spacing:0.132px;">1000</span>
<span style="left:328.16px;top:118.42px;line-height:8.96px;font-size:6.4px;color:#3c3c3c;font-weight:400;letter-spacing:0.038px;">2</span>
<span style="left:322.76px;top:399.38px;line-height:9.24px;font-size:6.6px;color:#3c3c3c;font-weight:400;letter-spacing:0.132px;">2000</span>
<span style="left:365.34px;top:118.42px;line-height:8.96px;font-size:6.4px;color:#3c3c3c;font-weight:400;letter-spacing:0.038px;">3</span>
<span style="left:359.94px;top:399.38px;line-height:9.24px;font-size:6.6px;color:#3c3c3c;font-weight:400;letter-spacing:0.132px;">3000</span>
<span style="left:402.52px;top:118.42px;line-height:8.96px;font-size:6.4px;color:#3c3c3c;font-weight:400;letter-spacing:0.038px;">4</span>
<span style="left:397.12px;top:399.38px;line-height:9.24px;font-size:6.6px;color:#3c3c3c;font-weight:400;letter-spacing:0.132px;">4000</span>
<span style="left:439.70px;top:118.42px;line-height:8.96px;font-size:6.4px;color:#3c3c3c;font-weight:400;letter-spacing:0.038px;">5</span>
<span style="left:434.30px;top:399.38px;line-height:9.24px;font-size:6.6px;color:#3c3c3c;font-weight:400;letter-spacing:0.132px;">5000</span>
<span style="left:476.88px;top:118.42px;line-height:8.96px;font-size:6.4px;color:#3c3c3c;font-weight:400;letter-spacing:0.038px;">6</span>
<span style="left:471.48px;top:399.38px;line-height:9.24px;font-size:6.6px;color:#3c3c3c;font-weight:400;letter-spacing:0.132px;">6000</span>
<span style="left:514.06px;top:118.42px;line-height:8.96px;font-size:6.4px;color:#3c3c3c;font-weight:400;letter-spacing:0.038px;">7</span>
<span style="left:508.66px;top:399.38px;line-height:9.24px;font-size:6.6px;color:#3c3c3c;font-weight:400;letter-spacing:0.132px;">7000</span>
<span style="left:551.24px;top:118.42px;line-height:8.96px;font-size:6.4px;color:#3c3c3c;font-weight:400;letter-spacing:0.038px;">8</span>
<span style="left:545.84px;top:399.38px;line-height:9.24px;font-size:6.6px;color:#3c3c3c;font-weight:400;letter-spacing:0.132px;">8000</span>
<span style="left:588.42px;top:118.42px;line-height:8.96px;font-size:6.4px;color:#3c3c3c;font-weight:400;letter-spacing:0.038px;">9</span>
<span style="left:583.02px;top:399.38px;line-height:9.24px;font-size:6.6px;color:#3c3c3c;font-weight:400;letter-spacing:0.132px;">9000</span>
<span style="left:623.80px;top:118.42px;line-height:8.96px;font-size:6.4px;color:#3c3c3c;font-weight:400;letter-spacing:0.045px;">10</span>
<span style="left:618.15px;top:399.38px;line-height:9.24px;font-size:6.6px;color:#3c3c3c;font-weight:400;letter-spacing:0.191px;">10000</span>
<span style="left:660.98px;top:118.42px;line-height:8.96px;font-size:6.4px;color:#3c3c3c;font-weight:400;letter-spacing:0.280px;">11</span>
<span style="left:655.33px;top:399.38px;line-height:9.24px;font-size:6.6px;color:#3c3c3c;font-weight:400;letter-spacing:0.288px;">11000</span>
<span style="left:698.16px;top:118.42px;line-height:8.96px;font-size:6.4px;color:#3c3c3c;font-weight:400;letter-spacing:0.045px;">12</span>
<span style="left:692.51px;top:399.38px;line-height:9.24px;font-size:6.6px;color:#3c3c3c;font-weight:400;letter-spacing:0.191px;">12000</span>
<span style="left:735.34px;top:118.42px;line-height:8.96px;font-size:6.4px;color:#3c3c3c;font-weight:400;letter-spacing:0.045px;">13</span>
<span style="left:729.69px;top:399.38px;line-height:9.24px;font-size:6.6px;color:#3c3c3c;font-weight:400;letter-spacing:0.191px;">13000</span>
<span style="left:772.52px;top:118.42px;line-height:8.96px;font-size:6.4px;color:#3c3c3c;font-weight:400;letter-spacing:0.045px;">14</span>
<span style="left:766.87px;top:399.38px;line-height:9.24px;font-size:6.6px;color:#3c3c3c;font-weight:400;letter-spacing:0.191px;">14000</span>
<span style="left:248.70px;top:393.42px;line-height:8.96px;font-size:6.4px;color:#3c3c3c;font-weight:400;letter-spacing:0.138px;">0</span>
<span style="left:245.00px;top:367.64px;line-height:8.96px;font-size:6.4px;color:#3c3c3c;font-weight:400;letter-spacing:0.145px;">25</span>
<span style="left:245.00px;top:341.87px;line-height:8.96px;font-size:6.4px;color:#3c3c3c;font-weight:400;letter-spacing:0.145px;">50</span>
<span style="left:245.00px;top:316.09px;line-height:8.96px;font-size:6.4px;color:#3c3c3c;font-weight:400;letter-spacing:0.145px;">75</span>
<span style="left:241.30px;top:290.32px;line-height:8.96px;font-size:6.4px;color:#3c3c3c;font-weight:400;letter-spacing:0.143px;">100</span>
<span style="left:241.30px;top:264.54px;line-height:8.96px;font-size:6.4px;color:#3c3c3c;font-weight:400;letter-spacing:0.143px;">125</span>
<span style="left:241.30px;top:238.77px;line-height:8.96px;font-size:6.4px;color:#3c3c3c;font-weight:400;letter-spacing:0.143px;">150</span>
<span style="left:241.30px;top:213.00px;line-height:8.96px;font-size:6.4px;color:#3c3c3c;font-weight:400;letter-spacing:0.143px;">175</span>
<span style="left:241.30px;top:187.22px;line-height:8.96px;font-size:6.4px;color:#3c3c3c;font-weight:400;letter-spacing:0.143px;">200</span>
<span style="left:241.30px;top:161.45px;line-height:8.96px;font-size:6.4px;color:#3c3c3c;font-weight:400;letter-spacing:0.143px;">225</span>
<span style="left:241.30px;top:135.67px;line-height:8.96px;font-size:6.4px;color:#3c3c3c;font-weight:400;letter-spacing:0.143px;">250</span>
<span style="left:530.20px;top:104.65px;line-height:9.1px;font-size:6.5px;color:#3c3c3c;font-weight:400;letter-spacing:-0.436px;">ms</span>
<span style="left:530.60px;top:411.15px;line-height:9.1px;font-size:6.5px;color:#3c3c3c;font-weight:400;letter-spacing:-0.038px;">us</span>
<span style="left:232.80px;top:455.87px;line-height:9.45px;font-size:6.75px;color:#2a2a2a;font-weight:400;letter-spacing:0.174px;">Print Log</span>
<span style="left:274.40px;top:455.87px;line-height:9.45px;font-size:6.75px;color:#2a2a2a;font-weight:400;letter-spacing:0.134px;">Save Log</span>
<span style="left:839.30px;top:67.68px;line-height:9.45px;font-size:6.75px;color:#222;font-weight:400;letter-spacing:0.271px;">Measurement Setup</span>
<span style="left:918.70px;top:67.68px;line-height:9.45px;font-size:6.75px;color:#1c3444;font-weight:400;letter-spacing:0.117px;">EEPROM/Misc</span>
<span style="left:978.90px;top:67.68px;line-height:9.45px;font-size:6.75px;color:#222;font-weight:400;letter-spacing:0.225px;">Threshold Setup</span>
<span style="left:851.05px;top:89.48px;line-height:9.45px;font-size:6.75px;color:#eef5fb;font-weight:400;letter-spacing:0.248px;-webkit-text-stroke:0.250px;">Read Sensor ID</span>
<span style="left:914.85px;top:89.48px;line-height:9.45px;font-size:6.75px;color:#eef5fb;font-weight:400;letter-spacing:0.441px;-webkit-text-stroke:0.250px;">ead Sensor Temperatu</span>
<span style="left:1006.30px;top:89.48px;line-height:9.45px;font-size:6.75px;color:#eef5fb;font-weight:400;letter-spacing:0.038px;-webkit-text-stroke:0.250px;">Read EEPROM</span>
<span style="left:848.15px;top:106.18px;line-height:9.45px;font-size:6.75px;color:#eef5fb;font-weight:400;letter-spacing:0.147px;-webkit-text-stroke:0.250px;">Read nfd_status_t</span>
<span style="left:915.55px;top:106.18px;line-height:9.45px;font-size:6.75px;color:#eef5fb;font-weight:400;letter-spacing:0.187px;-webkit-text-stroke:0.250px;">Read measure_status_t</span>
<span style="left:995.95px;top:106.18px;line-height:9.45px;font-size:6.75px;color:#eef5fb;font-weight:400;letter-spacing:0.174px;-webkit-text-stroke:0.250px;">Read device_status_t</span>
<span style="left:847.45px;top:123.03px;line-height:9.45px;font-size:6.75px;color:#eef5fb;font-weight:400;letter-spacing:0.238px;-webkit-text-stroke:0.250px;">Read calibration_t</span>
<span style="left:923.70px;top:123.03px;line-height:9.45px;font-size:6.75px;color:#eef5fb;font-weight:400;letter-spacing:0.284px;-webkit-text-stroke:0.250px;">Write calibration_t</span>
<span style="left:1007.30px;top:123.03px;line-height:9.45px;font-size:6.75px;color:#eef5fb;font-weight:400;letter-spacing:0.005px;-webkit-text-stroke:0.250px;">Write EECOPY</span>
<span style="left:853.70px;top:139.88px;line-height:9.45px;font-size:6.75px;color:#eef5fb;font-weight:400;letter-spacing:0.301px;-webkit-text-stroke:0.250px;">Write Standby</span>
<span style="left:930.00px;top:139.88px;line-height:9.45px;font-size:6.75px;color:#eef5fb;font-weight:400;letter-spacing:0.390px;-webkit-text-stroke:0.250px;">Write Wakeup</span>
<span style="left:840.80px;top:159.18px;line-height:9.45px;font-size:6.75px;color:#222;font-weight:400;letter-spacing:-0.314px;">Property</span>
<span style="left:956.00px;top:159.18px;line-height:9.45px;font-size:6.75px;color:#222;font-weight:400;letter-spacing:-0.273px;">Value</span>
<span style="left:851.40px;top:171.28px;line-height:9.45px;font-size:6.75px;color:#222;font-weight:400;letter-spacing:-0.139px;">Sensor Name(Read Only)</span>
<span style="left:851.40px;top:181.99px;line-height:9.45px;font-size:6.75px;color:#222;font-weight:400;letter-spacing:-0.195px;">Sensor ID(Read Only)</span>
<span style="left:851.40px;top:192.69px;line-height:9.45px;font-size:6.75px;color:#222;font-weight:400;letter-spacing:-0.118px;">Sensor Temperature(Read Only)</span>
<span style="left:851.40px;top:203.41px;line-height:9.45px;font-size:6.75px;color:#222;font-weight:400;letter-spacing:-0.280px;">EEPROM(Read Only)</span>
<span style="left:851.40px;top:214.12px;line-height:9.45px;font-size:6.75px;color:#222;font-weight:400;letter-spacing:-0.116px;">nfd_status_t(Read Only)</span>
<span style="left:851.40px;top:224.83px;line-height:9.45px;font-size:6.75px;color:#222;font-weight:400;letter-spacing:-0.168px;">measure_status_t(Read Only)</span>
<span style="left:851.40px;top:235.54px;line-height:9.45px;font-size:6.75px;color:#222;font-weight:400;letter-spacing:-0.154px;">device_status_t(Read Only)</span>
<span style="left:851.40px;top:246.25px;line-height:9.45px;font-size:6.75px;color:#222;font-weight:400;letter-spacing:-0.000px;">calibration_t</span>
<span style="left:851.40px;top:256.95px;line-height:9.45px;font-size:6.75px;color:#222;font-weight:400;letter-spacing:-0.657px;">EECOPY</span>
<span style="left:851.40px;top:267.66px;line-height:9.45px;font-size:6.75px;color:#222;font-weight:400;letter-spacing:-0.083px;">Standby</span>
<span style="left:851.40px;top:278.37px;line-height:9.45px;font-size:6.75px;color:#222;font-weight:400;letter-spacing:-0.003px;">Wakeup</span>
<span style="left:2.20px;top:570.97px;line-height:9.45px;font-size:6.75px;color:#2a2a2a;font-weight:400;letter-spacing:0.207px;">&gt;&gt;Connect Status: Connected!  2026-04-06 19:44:36.761: Read sensor is finished.</span>
<span style="left:1020.30px;top:570.97px;line-height:9.45px;font-size:6.75px;color:#2a2a2a;font-weight:400;letter-spacing:0.240px;">&gt;&gt;Timer: 00:00:00</span>
</div></body></html>
